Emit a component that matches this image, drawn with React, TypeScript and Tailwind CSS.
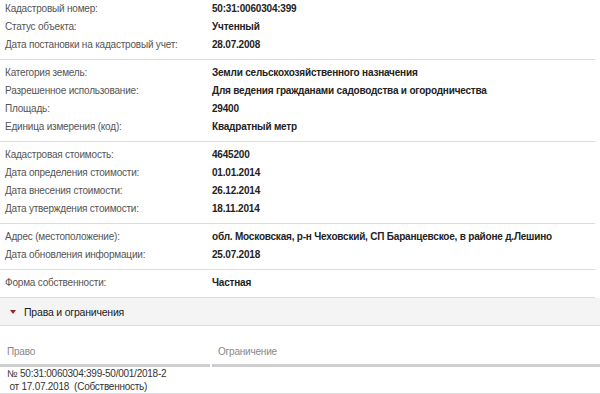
import React from "react";

type Row = [string, string];

const groups: Row[][] = [
  [
    ["Кадастровый номер:", "50:31:0060304:399"],
    ["Статус объекта:", "Учтенный"],
    ["Дата постановки на кадастровый учет:", "28.07.2008"],
  ],
  [
    ["Категория земель:", "Земли сельскохозяйственного назначения"],
    ["Разрешенное использование:", "Для ведения гражданами садоводства и огородничества"],
    ["Площадь:", "29400"],
    ["Единица измерения (код):", "Квадратный метр"],
  ],
  [
    ["Кадастровая стоимость:", "4645200"],
    ["Дата определения стоимости:", "01.01.2014"],
    ["Дата внесения стоимости:", "26.12.2014"],
    ["Дата утверждения стоимости:", "18.11.2014"],
  ],
  [
    ["Адрес (местоположение):", "обл. Московская, р-н Чеховский, СП Баранцевское, в районе д.Лешино"],
    ["Дата обновления информации:", "25.07.2018"],
  ],
  [["Форма собственности:", "Частная"]],
];

export default function App() {
  return (
    <div
      className="w-[600px] h-[394px] overflow-hidden bg-white text-[10px] leading-[18px] tracking-[-0.2px]"
      style={{ fontFamily: '"Liberation Sans", Arial, sans-serif' }}
    >
      <div className="w-[595px]">
        {groups.map((g, gi) => (
          <div
            key={gi}
            className={`border-b border-[#dcdcdc] pb-[5px] ${gi === 0 ? "pt-0" : "pt-[4px]"}`}
          >
            {g.map(([l, v]) => (
              <div key={l} className="flex h-[18px] items-center whitespace-nowrap">
                <div className="w-[212px] pl-[5px] text-[#555]">{l}</div>
                <div className="font-bold text-[#222]">{v}</div>
              </div>
            ))}
          </div>
        ))}
      </div>
      <div className="flex h-[28px] items-center border-b border-[#dcdcdc] bg-[#f4f4f4] pl-[10px] text-[10.5px] text-[#222]">
        <svg width="6" height="4" viewBox="0 0 6 4" className="mr-[8px]">
          <polygon points="0,0 6,0 3,4" fill="#9b2335" />
        </svg>
        Права и ограничения
      </div>
      <div className="h-[19px]" />
      <div className="flex h-[22px] items-end text-[#888]">
        <div className="mr-[2px] w-[210px] border-b-[3px] border-[#cfcfcf] pb-[3px] pl-[7px]">Право</div>
        <div className="flex-1 border-b-[3px] border-[#cfcfcf] pb-[3px] pl-[6px]">Ограничение</div>
      </div>
      <div className="border-b border-[#dcdcdc] pl-[7px] pt-0 leading-[13px] tracking-[-0.25px] text-[#333]">
        <div>№ 50:31:0060304:399-50/001/2018-2</div>
        <div className="whitespace-pre"> от 17.07.2018  (Собственность)</div>
      </div>
    </div>
  );
}
